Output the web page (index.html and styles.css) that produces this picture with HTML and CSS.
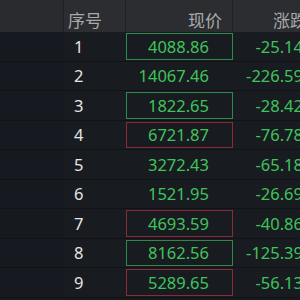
FILE: index.html
```html
<!DOCTYPE html>
<html lang="zh-CN">
<head>
<meta charset="utf-8">
<title>行情</title>
<link rel="stylesheet" href="styles.css">
</head>
<body>
<div class="table">
  <div class="row head">
    <div class="c c1"></div>
    <div class="c c2"><span class="h-idx">序号</span></div>
    <div class="c c3">现价</div>
    <div class="c c4">涨跌幅</div>
  </div>
  <div class="row"><div class="c c1"></div><div class="c c2">1</div><div class="c c3"><span class="box up">4088.86</span></div><div class="c c4">-25.14</div></div>
  <div class="row"><div class="c c1"></div><div class="c c2">2</div><div class="c c3"><span class="box">14067.46</span></div><div class="c c4">-226.59</div></div>
  <div class="row"><div class="c c1"></div><div class="c c2">3</div><div class="c c3"><span class="box up">1822.65</span></div><div class="c c4">-28.42</div></div>
  <div class="row"><div class="c c1"></div><div class="c c2">4</div><div class="c c3"><span class="box down">6721.87</span></div><div class="c c4">-76.78</div></div>
  <div class="row"><div class="c c1"></div><div class="c c2">5</div><div class="c c3"><span class="box">3272.43</span></div><div class="c c4">-65.18</div></div>
  <div class="row"><div class="c c1"></div><div class="c c2">6</div><div class="c c3"><span class="box">1521.95</span></div><div class="c c4">-26.69</div></div>
  <div class="row"><div class="c c1"></div><div class="c c2">7</div><div class="c c3"><span class="box down">4693.59</span></div><div class="c c4">-40.86</div></div>
  <div class="row"><div class="c c1"></div><div class="c c2">8</div><div class="c c3"><span class="box up">8162.56</span></div><div class="c c4">-125.39</div></div>
  <div class="row"><div class="c c1"></div><div class="c c2">9</div><div class="c c3"><span class="box down">5289.65</span></div><div class="c c4">-56.13</div></div>
</div>
</body>
</html>
```
FILE: styles.css
```css
html, body {
  margin: 0;
  padding: 0;
  background: #171a1f;
  overflow: hidden;
}
.table {
  width: 330px;
  font-family: "Noto Sans", "Open Sans", "Noto Sans CJK SC", sans-serif;
}
.row {
  display: grid;
  grid-template-columns: 64px 62px 107px 97px;
  height: 29.5px;
  box-sizing: border-box;
  border-bottom: 1px solid #111317;
  background: #181b20;
}
.row .c1 { background: #161a20; }
.c {
  display: flex;
  align-items: center;
  box-sizing: border-box;
  font-size: 16.5px;
  color: #3fc35c;
}
.c2 {
  justify-content: flex-start;
  padding-left: 10px;
  color: #e4e4e4;
}
.c3 {
  justify-content: stretch;
  padding: 1px 0;
}
.c4 {
  justify-content: flex-end;
  padding-right: 27px;
}
.box {
  flex: 1;
  height: 100%;
  box-sizing: border-box;
  display: flex;
  align-items: center;
  justify-content: flex-end;
  padding-right: 23px;
  border: 1px solid transparent;
}
.box.up { border-color: #2c8a48; }
.box.down { border-color: #8e2a35; }

.row.head {
  height: 32px;
  background: #2b2d31;
  border-bottom: none;
}
.row.head .c1 { background: #292b2f; }
.head .c {
  font-family: "Noto Sans CJK SC", sans-serif;
  font-size: 17px;
  color: #a9a9a9;
  padding-top: 6px;
  border-right: 1px solid #1e2024;
}
.head .c2 {
  padding-left: 4px;
  color: #a9a9a9;
}
.head .c3 {
  justify-content: flex-end;
  padding-right: 10px;
  padding-bottom: 0;
}
.head .c4 {
  justify-content: flex-start;
  padding-left: 40px;
  padding-right: 0;
}
```
